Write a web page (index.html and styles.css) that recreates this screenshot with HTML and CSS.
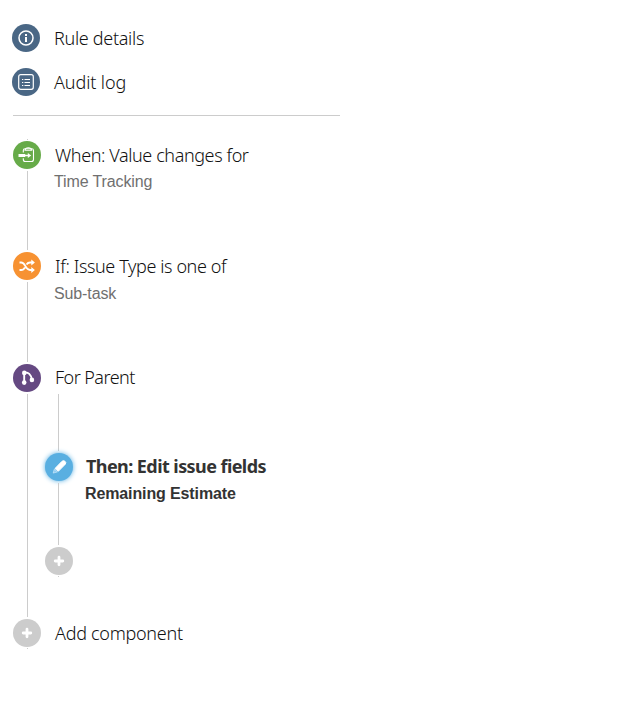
FILE: index.html
```html
<!DOCTYPE html>
<html lang="en">
<head>
  <meta charset="UTF-8">
  <meta name="viewport" content="width=device-width, initial-scale=1.0">
  <title>Automation rule</title>
  <link rel="stylesheet" href="styles.css">
</head>

<body>
  <nav class="rule-menu">
    <a class="menu-item">
      <span class="icon navy">
        <svg viewBox="0 0 28 28"><circle cx="14" cy="14" r="7" fill="none" stroke="#fff" stroke-width="1.5"/><path d="M13 10h2v2h-2zM13 13h2v5h-2z" fill="#fff"/></svg>
      </span>
      <span class="title t-details">Rule details</span>
    </a>
    <a class="menu-item">
      <span class="icon navy">
        <svg viewBox="0 0 28 28"><rect x="6.7" y="6.7" width="14.6" height="14.6" rx="2" fill="none" stroke="#fff" stroke-width="1.2"/><path d="M10 11.500h1.300M12.500 11.500h5.500M10 14.500h1.300M12.500 14.500h5.500M10 17.500h1.300M12.500 17.500h5.500" stroke="#fff" stroke-width="1.1"/></svg>
      </span>
      <span class="title t-audit">Audit log</span>
    </a>
  </nav>

  <main class="rule">
    <!-- Trigger -->
    <section class="step trigger">
      <div class="rail">
        <i class="tick"></i>
        <span class="icon green">
          <svg viewBox="0 0 28 28"><g fill="none" stroke="#fff" stroke-width="1.1"><path d="M10.300 11.500V9.500q0-1.800 1.800-1.800h6.600q1.800 0 1.800 1.800v9q0 2-2 2h-6.200q-2 0-2-2v-1.300"/><path d="M12 9.300q.3-2.600 3.300-2.600t3.400 2.600z"/></g><path d="M5.500 13h6.700v3H5.500z" fill="#fff"/><path d="M11 14.500h5" stroke="#fff" stroke-width="1.5"/><path d="M14.800 12l3.400 2.500-3.400 2.500z" fill="#fff"/></svg>
        </span>
        <i class="line"></i>
      </div>
      <div class="text">
        <div class="title t-when">When: Value changes for</div>
        <div class="detail">Time Tracking</div>
      </div>
    </section>

    <!-- Condition -->
    <section class="step condition">
      <div class="rail">
        <span class="icon orange">
          <svg viewBox="0 0 28 28"><path d="M6.500 10.500h1.700c4.600 0 3.800 7.500 8.800 7.500h2M6.500 18h1.700c2 0 3-1.300 3.700-2.700M13.500 12.500c.8-1.200 1.700-2 3.500-2h2" fill="none" stroke="#fff" stroke-width="1.8"/><path d="M18.300 7.500l3.600 3-3.600 3zM18.300 15l3.600 3-3.600 3z" fill="#fff"/></svg>
        </span>
        <i class="line"></i>
      </div>
      <div class="text">
        <div class="title t-if">If: Issue Type is one of</div>
        <div class="detail">Sub-task</div>
      </div>
    </section>

    <!-- Branch -->
    <section class="step branch">
      <div class="rail">
        <span class="icon purple">
          <svg viewBox="0 0 28 28"><path d="M11.200 9v9.500M11.200 8.600c4-.8 7 1.900 7.600 7" fill="none" stroke="#fff" stroke-width="1.900"/><g fill="#fff"><circle cx="11.300" cy="8.900" r="2.300"/><circle cx="11.200" cy="18.600" r="2.300"/><circle cx="18.900" cy="15.900" r="2.300"/></g></svg>
        </span>
        <i class="line"></i>
      </div>
      <div class="branch-body">
        <div class="title t-parent">For Parent</div>
        <div class="children">
          <i class="line lead"></i>
          <div class="step child">
            <div class="rail">
              <span class="icon blue">
                <svg viewBox="0 0 28 28"><path d="M10 15.500l7-7.200q1.400-1.300 3 0t.2 3L13.300 18.300z" fill="#fff" stroke="#fff" stroke-width="1"/><path d="M9.200 16.300l3.200 2.600-4.200 1.200z" fill="#8dccf2" stroke="#d8effc" stroke-width=".6"/></svg>
              </span>
              <i class="line"></i>
            </div>
            <div class="text">
              <div class="title t-then">Then: Edit issue fields</div>
              <div class="detail">Remaining Estimate</div>
            </div>
          </div>
          <div class="rail">
            <span class="icon gray">
              <svg viewBox="0 0 28 28"><path d="M14 10.200v7.600M10.200 14h7.600" stroke="#fff" stroke-width="2.800" stroke-linecap="round"/></svg>
            </span>
            <i class="tick"></i>
          </div>
        </div>
      </div>
    </section>

    <section class="step">
      <div class="rail">
        <span class="icon gray">
          <svg viewBox="0 0 28 28"><path d="M14 10.200v7.600M10.200 14h7.600" stroke="#fff" stroke-width="2.800" stroke-linecap="round"/></svg>
        </span>
        <i class="tick"></i>
      </div>
      <div class="text">
        <div class="title t-add">Add component</div>
      </div>
    </section>
  </main>
</body>
</html>
```
FILE: styles.css
```css
* {
  box-sizing: border-box;
}

body {
  margin: 0;
  background: #fff;
  color: #333;
  font-family: "Segoe UI", "Noto Sans", "Open Sans", sans-serif;
}

/* Top menu */
.rule-menu {
  display: flex;
  flex-direction: column;
  gap: 16px;
  width: 327px;
  height: 92px;
  margin: 24px 0 0 13px;
  border-bottom: 1px solid #ccc;
}

.menu-item {
  display: flex;
  gap: 14px;
  margin-left: -1px;
}

/* Rule chain */
.rule {
  padding: 23px 0 0 13px;
}

.step {
  display: flex;
  gap: 14px;
}

.trigger { height: 113px; }
.condition { height: 112px; }
.branch { height: 255px; }
.child { height: 94px; }

.trigger .text {
  padding-top: 2px;
}

.rail {
  display: flex;
  flex-direction: column;
  flex: none;
  width: 28px;
}

.icon {
  flex: none;
  width: 28px;
  height: 28px;
  border-radius: 50%;
}

.icon svg {
  display: block;
  width: 28px;
  height: 28px;
}

.navy { background: #4a6785; }
.green { background: #67ab49; }
.orange { background: #f79232; }
.purple { background: #654982; }
.blue {
  background: #59afe1;
  box-shadow: 0 0 5px #59afe1;
}
.gray { background: #ccc; }

.line {
  flex: 1;
  width: 1px;
  margin: 2px 0 2px 14px;
  background: #ccc;
}

.tick {
  flex: none;
  width: 1px;
  height: 1px;
  margin: 1px 0 0 14px;
  background: #ccc;
}

.trigger .tick {
  margin: 0 0 1px 14px;
}

.title {
  height: 28px;
  color: #111;
  font-size: 18px;
  font-weight: 300;
  line-height: 28px;
  white-space: nowrap;
}

.t-details { letter-spacing: -0.3px; }
.t-audit { letter-spacing: -0.1px; }
.t-when { letter-spacing: -0.4px; }
.t-if { letter-spacing: -0.39px; }
.t-parent { letter-spacing: -0.55px; }
.t-then { letter-spacing: -0.57px; }
.t-add { letter-spacing: -0.28px; }

.detail {
  color: #707070;
  font-family: "Liberation Sans", Arial, sans-serif;
  font-size: 16px;
  line-height: 26px;
  margin-left: -1px;
  letter-spacing: -0.12px;
  white-space: nowrap;
}

.condition .detail {
  line-height: 28px;
}

.branch .title {
  line-height: 27px;
}

/* Steps nested in the branch */
.children {
  display: flex;
  flex-direction: column;
  margin-left: -10px;
}

.children .line,
.children .tick {
  margin-left: 13px;
}

.children .lead {
  flex: none;
  height: 57px;
}

.child {
  gap: 13px;
}

.child .title,
.child .detail {
  color: #333;
  font-weight: bold;
}
```
